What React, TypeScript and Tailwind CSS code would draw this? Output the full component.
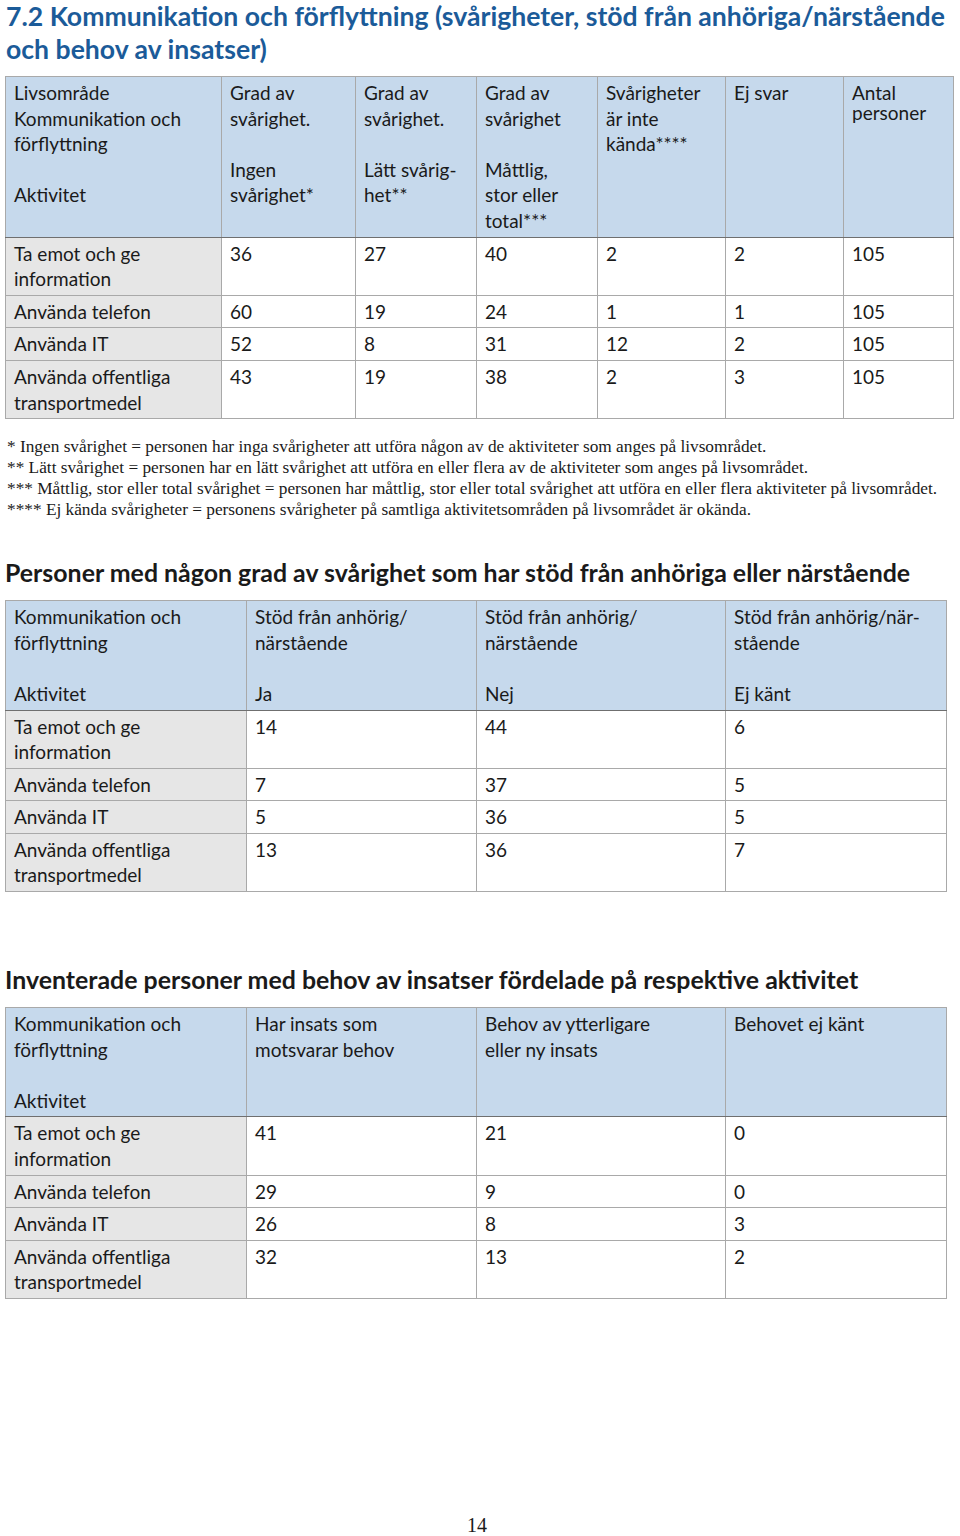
const sans = { fontFamily: "Lato, 'Open Sans', sans-serif" }

type Row = { label: string[]; values: string[] }

const t1Rows: Row[] = [
    { label: ["Ta emot och ge", "information"], values: ["36", "27", "40", "2", "2", "105"] },
    { label: ["Använda telefon"], values: ["60", "19", "24", "1", "1", "105"] },
    { label: ["Använda IT"], values: ["52", "8", "31", "12", "2", "105"] },
    { label: ["Använda offentliga", "transportmedel"], values: ["43", "19", "38", "2", "3", "105"] },
]

const t2Rows: Row[] = [
    { label: ["Ta emot och ge", "information"], values: ["14", "44", "6"] },
    { label: ["Använda telefon"], values: ["7", "37", "5"] },
    { label: ["Använda IT"], values: ["5", "36", "5"] },
    { label: ["Använda offentliga", "transportmedel"], values: ["13", "36", "7"] },
]

const t3Rows: Row[] = [
    { label: ["Ta emot och ge", "information"], values: ["41", "21", "0"] },
    { label: ["Använda telefon"], values: ["29", "9", "0"] },
    { label: ["Använda IT"], values: ["26", "8", "3"] },
    { label: ["Använda offentliga", "transportmedel"], values: ["32", "13", "2"] },
]

function Lines({ lines }: { lines: string[] }) {
    return (
        <>
            {lines.map((l, i) => (
                <div key={i} className="h-[25.6px] whitespace-nowrap">{l || "\u00a0"}</div>
            ))}
        </>
    )
}

function HeadCell({ lines, tight }: { lines: string[]; tight?: boolean }) {
    return (
        <th className="border border-[#a9a9a9] border-b-[#6f6f6f] bg-[#c6d9ec] px-2 py-[3px] text-left align-top font-normal">
            {tight ? (
                <div className="leading-[20px] pt-[3px]">
                    {lines.map((l, i) => <div key={i}>{l}</div>)}
                </div>
            ) : (
                <Lines lines={lines} />
            )}
        </th>
    )
}

function Body({ rows }: { rows: Row[] }) {
    return (
        <tbody>
            {rows.map((r, i) => (
                <tr key={i}>
                    <td className="border border-[#a9a9a9] bg-[#e6e6e6] px-2 py-[3px] align-top">
                        <Lines lines={r.label} />
                    </td>
                    {r.values.map((v, j) => (
                        <td key={j} className="border border-[#a9a9a9] bg-white px-2 py-[3px] align-top">
                            <Lines lines={[v]} />
                        </td>
                    ))}
                </tr>
            ))}
        </tbody>
    )
}

export default function App() {
    return (
        <div className="w-[960px] h-[1536px] bg-white text-[#1a1a1a] overflow-hidden">
            <h1
                className="pl-[6px] text-[26.6px] leading-[33px] font-bold text-[#1b5b99]"
                style={sans}
            >
                7.2 Kommunikation och förflyttning (svårigheter, stöd från anhöriga/närstående
                <br />
                och behov av insatser)
            </h1>

            <table
                className="ml-[5px] mt-[10px] w-[948px] table-fixed border-collapse text-[19px] leading-[25.6px]"
                style={sans}
            >
                <colgroup>
                    <col className="w-[216px]" />
                    <col className="w-[134px]" />
                    <col className="w-[121px]" />
                    <col className="w-[121px]" />
                    <col className="w-[128px]" />
                    <col className="w-[118px]" />
                    <col className="w-[110px]" />
                </colgroup>
                <thead>
                    <tr>
                        <HeadCell lines={["Livsområde", "Kommunikation och", "förflyttning", "", "Aktivitet", ""]} />
                        <HeadCell lines={["Grad av", "svårighet.", "", "Ingen", "svårighet*", ""]} />
                        <HeadCell lines={["Grad av", "svårighet.", "", "Lätt svårig-", "het**", ""]} />
                        <HeadCell lines={["Grad av", "svårighet", "", "Måttlig,", "stor eller", "total***"]} />
                        <HeadCell lines={["Svårigheter", "är inte", "kända****"]} />
                        <HeadCell lines={["Ej svar"]} />
                        <HeadCell lines={["Antal", "personer"]} tight />
                    </tr>
                </thead>
                <Body rows={t1Rows} />
            </table>

            <div
                className="mt-[17px] pl-[7px] text-[17.3px] leading-[21px] text-[#1a1a1a]"
                style={{ fontFamily: "'Liberation Serif', serif" }}
            >
                <p>* Ingen svårighet = personen har inga svårigheter att utföra någon av de aktiviteter som anges på livsområdet.</p>
                <p>** Lätt svårighet = personen har en lätt svårighet att utföra en eller flera av de aktiviteter som anges på livsområdet.</p>
                <p>*** Måttlig, stor eller total svårighet = personen har måttlig, stor eller total svårighet att utföra en eller flera aktiviteter på livsområdet.</p>
                <p>**** Ej kända svårigheter = personens svårigheter på samtliga aktivitetsområden på livsområdet är okända.</p>
            </div>

            <h2 className="mt-[36px] pl-[5px] text-[24.9px] leading-[32px] font-bold text-[#1a1a1a]" style={sans}>
                Personer med någon grad av svårighet som har stöd från anhöriga eller närstående
            </h2>

            <table
                className="ml-[5px] mt-[12px] w-[941px] table-fixed border-collapse text-[19px] leading-[25.6px]"
                style={sans}
            >
                <colgroup>
                    <col className="w-[241px]" />
                    <col className="w-[230px]" />
                    <col className="w-[249px]" />
                    <col className="w-[221px]" />
                </colgroup>
                <thead>
                    <tr>
                        <HeadCell lines={["Kommunikation och", "förflyttning", "", "Aktivitet"]} />
                        <HeadCell lines={["Stöd från anhörig/", "närstående", "", "Ja"]} />
                        <HeadCell lines={["Stöd från anhörig/", "närstående", "", "Nej"]} />
                        <HeadCell lines={["Stöd från anhörig/när-", "stående", "", "Ej känt"]} />
                    </tr>
                </thead>
                <Body rows={t2Rows} />
            </table>

            <h2 className="mt-[71px] pl-[5px] text-[24.9px] leading-[32px] font-bold text-[#1a1a1a]" style={sans}>
                Inventerade personer med behov av insatser fördelade på respektive aktivitet
            </h2>

            <table
                className="ml-[5px] mt-[12px] w-[941px] table-fixed border-collapse text-[19px] leading-[25.6px]"
                style={sans}
            >
                <colgroup>
                    <col className="w-[241px]" />
                    <col className="w-[230px]" />
                    <col className="w-[249px]" />
                    <col className="w-[221px]" />
                </colgroup>
                <thead>
                    <tr>
                        <HeadCell lines={["Kommunikation och", "förflyttning", "", "Aktivitet"]} />
                        <HeadCell lines={["Har insats som", "motsvarar behov", "", ""]} />
                        <HeadCell lines={["Behov av ytterligare", "eller ny insats", "", ""]} />
                        <HeadCell lines={["Behovet ej känt", "", "", ""]} />
                    </tr>
                </thead>
                <Body rows={t3Rows} />
            </table>

            <div
                className="mt-[214px] pr-[6px] text-center text-[20px] leading-[24px] text-[#1a1a1a]"
                style={{ fontFamily: "'Liberation Serif', serif" }}
            >
                14
            </div>
        </div>
    )
}
